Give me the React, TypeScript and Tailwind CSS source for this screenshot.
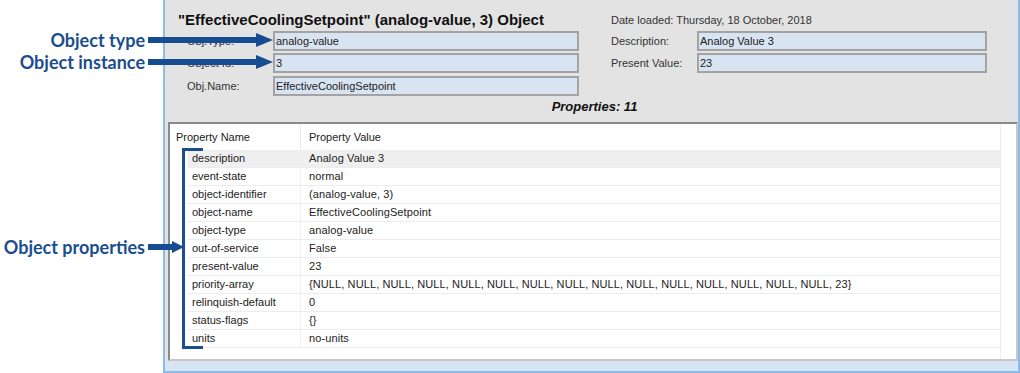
const rows: [string, string][] = [
  ['description', 'Analog Value 3'],
  ['event-state', 'normal'],
  ['object-identifier', '(analog-value, 3)'],
  ['object-name', 'EffectiveCoolingSetpoint'],
  ['object-type', 'analog-value'],
  ['out-of-service', 'False'],
  ['present-value', '23'],
  [
    'priority-array',
    '{NULL, NULL, NULL, NULL, NULL, NULL, NULL, NULL, NULL, NULL, NULL, NULL, NULL, NULL, NULL, 23}'
  ],
  ['relinquish-default', '0'],
  ['status-flags', '{}'],
  ['units', 'no-units']
];

function Field({ label, value, labelW, boxW, className = '' }: { label: string; value: string; labelW: string; boxW: string; className?: string }) {
  return (
    <div className={`flex items-center ${className}`}>
      <div className={`${labelW} text-[11px] text-[#333]`}>{label}</div>
      <div className={`${boxW} flex h-[20px] items-center border-2 border-[#a3a3a3] bg-[#d8e4f2] pl-[1px] text-[11px] text-[#222]`}>
        {value}
      </div>
    </div>
  );
}

function Arrow({ className, len, head, h }: { className: string; len: number; head: number; h: number }) {
  const shaft = 6;
  return (
    <svg className={`absolute ${className}`} width={len} height={h} viewBox={`0 0 ${len} ${h}`}>
      <rect x={0} y={(h - shaft) / 2} width={len - head + 1} height={shaft} fill="#164c92" />
      <polygon points={`${len - head},0 ${len},${h / 2} ${len - head},${h}`} fill="#164c92" />
    </svg>
  );
}

export default function App() {
  return (
    <div className="relative h-[373px] w-[1020px] overflow-hidden bg-white font-['Liberation_Sans',Arial,sans-serif]">
      <div className="ml-[163px] flex h-[373px] w-[857px] flex-col border-b-2 border-l-2 border-r-2 border-[#8cbbe9] bg-[#e3e3e3]">
        {/* header panel */}
        <div className="flex h-[122px] flex-col pl-[13px] pt-[11px]">
          <div className="flex">
            <div className="w-[433px]">
              <div className="h-[18px] whitespace-nowrap text-[15px] font-bold leading-[18px] text-[#111]">
                "EffectiveCoolingSetpoint" (analog-value, 3) Object
              </div>
              <Field className="mt-[2px] pl-[9px]" label="Obj.Type:" value="analog-value" labelW="w-[86px]" boxW="w-[306px]" />
              <Field className="mt-[2px] pl-[9px]" label="Object Id:" value="3" labelW="w-[86px]" boxW="w-[306px]" />
              <Field className="mt-[3px] pl-[9px]" label="Obj.Name:" value="EffectiveCoolingSetpoint" labelW="w-[86px]" boxW="w-[306px]" />
            </div>
            <div>
              <div className="h-[18px] text-[11px] leading-[18px] text-[#333]">Date loaded: Thursday, 18 October, 2018</div>
              <Field className="mt-[2px]" label="Description:" value="Analog Value 3" labelW="w-[86px]" boxW="w-[290px]" />
              <Field className="mt-[2px]" label="Present Value:" value="23" labelW="w-[86px]" boxW="w-[290px]" />
            </div>
          </div>
          <div className="-ml-[7px] mt-[3px] text-center text-[13px] font-bold italic leading-[16px] text-[#111]">
            Properties: 11
          </div>
        </div>

        {/* property grid */}
        <div className="ml-[3px] flex h-[239px] flex-col border-2 border-b-[#c8c8c8] border-l-[#8a8a8a] border-r-[#c8c8c8] border-t-[#8a8a8a] bg-white text-[11px] text-[#222]">
          <div className="flex h-[26px] items-center">
            <div className="w-[130px] pl-[6px]">Property Name</div>
            <div className="flex h-full w-[701px] items-center border-l border-r border-[#ececec] pl-[8px]">Property Value</div>
          </div>
          <div className="flex flex-1">
            <div className="w-[18px]" />
            <div className="flex w-[813px] flex-col border-r border-[#ececec]">
              {rows.map(([name, value], i) => (
                <div
                  key={name}
                  className={`flex h-[18px] items-center border-b border-[#ececec] ${i === 0 ? 'bg-[#efefef]' : ''}`}
                >
                  <div className="w-[112px] pl-[4px]">{name}</div>
                  <div className="flex h-full flex-1 items-center border-l border-[#f0f0f0] pl-[8px] tracking-[0.1px]">{value}</div>
                </div>
              ))}
            </div>
          </div>
        </div>
        <div className="flex-1 bg-[#d6e4f3]" />
      </div>

      {/* annotations */}
      <div className="absolute left-0 top-[28px] w-[145px] text-right font-['Lato',sans-serif] text-[18px] font-bold leading-[24px] text-[#1b4e8e]">
        Object type
      </div>
      <div className="absolute left-0 top-[50px] w-[145px] text-right font-['Lato',sans-serif] text-[18px] font-bold leading-[24px] text-[#1b4e8e]">
        Object instance
      </div>
      <div className="absolute left-0 top-[235px] w-[145px] text-right font-['Lato',sans-serif] text-[18px] font-bold leading-[24px] text-[#1b4e8e]">
        Object properties
      </div>
      <Arrow className="left-[148px] top-[33px]" len={125} head={17} h={14} />
      <Arrow className="left-[148px] top-[55px]" len={125} head={17} h={14} />
      <Arrow className="left-[148px] top-[241px]" len={36} head={12} h={12} />
      <div className="absolute left-[182px] top-[148px] h-[201px] w-[21px] border-b-[3px] border-l-[3px] border-t-[3px] border-[#1b4e8e]" />
    </div>
  );
}
